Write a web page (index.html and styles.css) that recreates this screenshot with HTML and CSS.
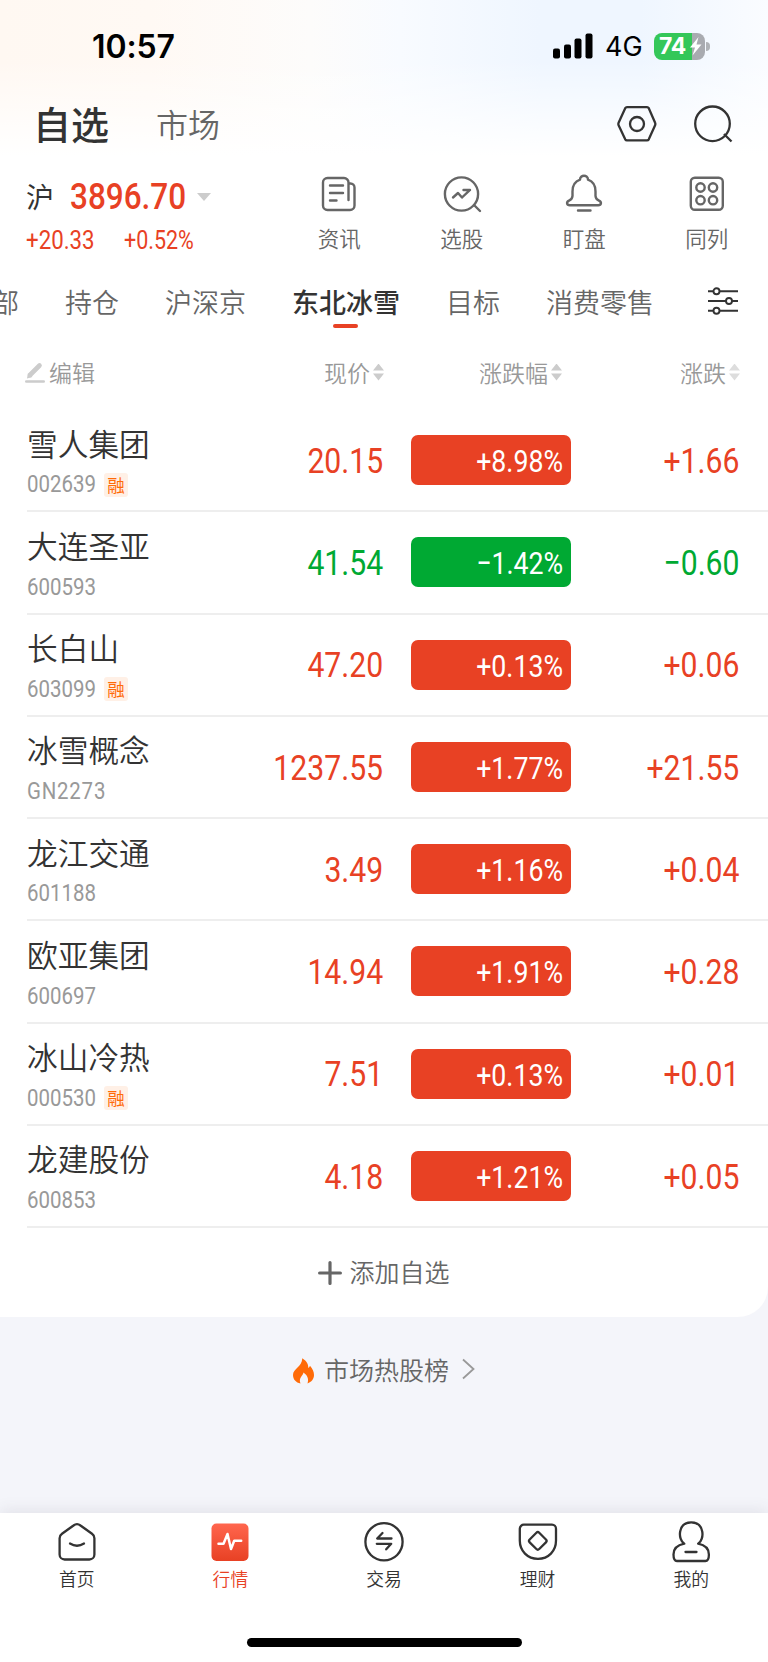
FILE: index.html
```html
<!DOCTYPE html>
<html lang="zh-CN">
<head>
<meta charset="utf-8">
<title>自选</title>
<link rel="stylesheet" href="styles.css">
</head>
<body>
<div class="screen">
  <div class="status">
    <div class="time">10:57</div>
    <div class="status-right">
      <svg width="40" height="26" viewBox="0 0 40 26"><rect x="0" y="15.5" width="7" height="10" rx="2"/><rect x="11" y="11.5" width="7" height="14" rx="2"/><rect x="21.500" y="5.500" width="7" height="20" rx="2"/><rect x="32.500" y="0.500" width="7" height="25" rx="2"/></svg>
      <span class="net">4G</span>
      <div class="battery"><div class="battery-body"><span>74</span><svg width="13" height="19" viewBox="0 0 13 19"><path d="M9.500 0 1 10.500h5L3.500 18.500 12.500 7.500H7.500Z" fill="#fff"/></svg></div><i class="battery-tip"></i></div>
    </div>
  </div>

  <header class="header">
    <h1>自选</h1>
    <span class="market">市场</span>
    <div class="header-icons">
      <svg width="40" height="38" viewBox="0 0 40 38" fill="none" stroke="#333" stroke-width="2.300"><path d="M10 2.200h20q1.200 0 1.800 1L38 17.500q.7 1.500 0 3L31.800 34.300q-.6 1-1.800 1H10q-1.200 0-1.800-1L1.700 20.500q-.7-1.500 0-3L8.200 3.200q.6-1 1.800-1Z"/><circle cx="20" cy="19" r="7"/></svg>
      <svg width="40" height="38" viewBox="0 0 40 38" fill="none" stroke="#333" stroke-width="2.300"><circle cx="19.500" cy="18.800" r="17.300"/><path d="m31 29 7.500 7.500"/></svg>
    </div>
  </header>

  <section class="summary">
    <div class="index">
      <div class="index-main"><span class="exchange">沪</span><span class="num index-value">3896.70</span><i class="caret"></i></div>
      <div class="index-sub"><span class="num">+20.33</span><span class="num percent">+0.52%</span></div>
    </div>
    <nav class="tools">
      <a class="tool"><svg width="40" height="40" viewBox="0 0 40 40"><path d="M28.500 36H8.500a4.500 4.500 0 0 1-4.500-4.500V8.500A4.500 4.500 0 0 1 8.500 4h16.500a4.500 4.500 0 0 1 4.500 4.500V26M29.500 9.500h2a4 4 0 0 1 4 4V31.500a4.500 4.500 0 0 1-4.500 4.500H24"/><path d="M11 11.500h13M11 19h13M11 26.500h6.500"/></svg><span>资讯</span></a>
      <a class="tool"><svg width="40" height="40" viewBox="0 0 40 40"><circle cx="19.500" cy="20" r="16.600"/><path d="m32 31 6 6M11 23.500l5-4.500 4 4.500 7.500-7.200M21.500 16h6.500"/></svg><span>选股</span></a>
      <a class="tool"><svg width="40" height="40" viewBox="0 0 40 40"><path d="M16 5.700C16 .5 24 .5 24 5.700c4.800 1.700 7.500 6.300 7.500 11.800v4.500q.2 3.200 3.500 4.600c3 1.500 2.300 4.700-.8 4.700H5.800c-3.100 0-3.800-3.200-.8-4.700q3.300-1.400 3.500-4.600v-4.500C8.500 12 11.200 7.400 16 5.700ZM14 36.500h12.500"/></svg><span>盯盘</span></a>
      <a class="tool"><svg width="40" height="40" viewBox="0 0 40 40"><rect x="3.800" y="3.800" width="32" height="32" rx="4"/><circle cx="13.500" cy="13.500" r="4.200"/><circle cx="26" cy="13.500" r="4.200"/><circle cx="13.500" cy="26.200" r="4.200"/><circle cx="26" cy="26.200" r="4.200"/></svg><span>同列</span></a>
    </nav>
  </section>

  <nav class="tabs">
    <span class="tab">部</span><span class="tab">持仓</span><span class="tab">沪深京</span><span class="tab active">东北冰雪</span><span class="tab">目标</span><span class="tab">消费零售</span>
    <svg class="filter" width="30" height="28" viewBox="0 0 30 28" fill="none" stroke="#333" stroke-width="1.900"><path d="M0 4.300h5.500M11.500 4.300H30M0 14h18M24 14h6M0 23.800h5.500M11.500 23.800H30"/><circle cx="8.500" cy="4.300" r="3"/><circle cx="21" cy="14" r="3"/><circle cx="8.500" cy="23.800" r="3"/></svg>
  </nav>

  <div class="grid thead">
    <span class="edit"><svg width="20" height="21" viewBox="0 0 20 21" stroke="#ccc" fill="none"><path d="M5 13 14.500 3.500" stroke-width="4.600" stroke-linecap="round"/><path d="M2 16.500 3 11l4.500 4Z" fill="#ccc" stroke="none"/><path d="M1.200 19.500h17.600" stroke-width="2.400" stroke-linecap="round"/></svg>编辑</span>
    <span class="sort">现价<i></i></span><span class="sort">涨跌幅<i></i></span><span class="sort pale">涨跌<i></i></span>
  </div>

  <main class="list">
    <div class="grid row up"><div class="stock"><b>雪人集团</b><div><span class="num code">002639</span><em>融</em></div></div><span class="num price">20.15</span><div class="pill"><span class="num">+8.98%</span></div><span class="num price">+1.66</span></div>
    <div class="grid row down"><div class="stock"><b>大连圣亚</b><div><span class="num code">600593</span></div></div><span class="num price">41.54</span><div class="pill"><span class="num">−1.42%</span></div><span class="num price">−0.60</span></div>
    <div class="grid row up"><div class="stock"><b>长白山</b><div><span class="num code">603099</span><em>融</em></div></div><span class="num price">47.20</span><div class="pill"><span class="num">+0.13%</span></div><span class="num price">+0.06</span></div>
    <div class="grid row up"><div class="stock"><b>冰雪概念</b><div><span class="num code lettered">GN2273</span></div></div><span class="num price">1237.55</span><div class="pill"><span class="num">+1.77%</span></div><span class="num price">+21.55</span></div>
    <div class="grid row up"><div class="stock"><b>龙江交通</b><div><span class="num code">601188</span></div></div><span class="num price">3.49</span><div class="pill"><span class="num">+1.16%</span></div><span class="num price">+0.04</span></div>
    <div class="grid row up"><div class="stock"><b>欧亚集团</b><div><span class="num code">600697</span></div></div><span class="num price">14.94</span><div class="pill"><span class="num">+1.91%</span></div><span class="num price">+0.28</span></div>
    <div class="grid row up"><div class="stock"><b>冰山冷热</b><div><span class="num code">000530</span><em>融</em></div></div><span class="num price">7.51</span><div class="pill"><span class="num">+0.13%</span></div><span class="num price">+0.01</span></div>
    <div class="grid row up"><div class="stock"><b>龙建股份</b><div><span class="num code">600853</span></div></div><span class="num price">4.18</span><div class="pill"><span class="num">+1.21%</span></div><span class="num price">+0.05</span></div>
  </main>
  <div class="add"><svg width="24" height="24" viewBox="0 0 24 24" stroke="#666" stroke-width="3.200" stroke-linecap="round"><path d="M12 1.600v20.800M1.600 12h20.800"/></svg><span>添加自选</span></div>
</div>

<div class="hot">
  <svg width="21" height="26" viewBox="0 0 21 26"><path d="M9.300.3C14 3.300 15.600 6.500 15.200 10q1.500-.7 1.800-2.300C19.500 10.500 21 13.500 21 17c0 4-2.500 7-6.500 8.500 1.500-4.500 0-8-4-11-.2 3-5.300 5-3 11C3 24.500 0 21.500 0 17 0 10.500 9 9.500 9.300.3Z" fill="#ff6b08"/></svg>
  <span>市场热股榜</span>
  <svg width="13" height="22" viewBox="0 0 13 22" fill="none" stroke="#999" stroke-width="1.800"><path d="m1 1.500 10.500 9.500L1 20.500"/></svg>
</div>

<footer class="bottom">
  <nav class="bottom-nav">
    <a><svg width="42" height="42" viewBox="0 0 42 42"><path d="M17.500 4.500q3.500-2.800 7 0L36 12.800q2.400 1.700 2.400 4.500V33.500a5 5 0 0 1-5 5H8.600a5 5 0 0 1-5-5V17.300q0-2.800 2.400-4.500Z"/><path d="M14 22.500q7 4.500 14 0"/></svg>首页</a>
    <a class="current"><svg width="42" height="42" viewBox="0 0 42 42"><defs><linearGradient id="g" x2="0" y2="1"><stop stop-color="#ff664e"/><stop offset="1" stop-color="#e84124"/></linearGradient></defs><rect x="2.500" y="2.500" width="37" height="37.500" rx="5" fill="url(#g)" stroke="none"/><path d="M9.500 22.700h5L18.500 13l3.500 15 3.200-8.200h7" stroke="#fff" stroke-width="2.500"/></svg>行情</a>
    <a><svg width="42" height="42" viewBox="0 0 42 42"><circle cx="21" cy="20.800" r="18.600"/><path d="M28.500 17.500H14.200l5.300-5.500M13.800 22.800H28.200l-5 5.500"/></svg>交易</a>
    <a><svg width="42" height="42" viewBox="0 0 42 42"><path d="M7 3.700h28a4 4 0 0 1 4 4V19.500C39 30 31.500 37.800 21 37.800S2.800 30 2.800 19.500V7.700a4 4 0 0 1 4.200-4Z"/><rect x="14" y="13.200" width="13.500" height="13.500" rx="2" transform="rotate(45 20.800 20)"/></svg>理财</a>
    <a><svg width="42" height="42" viewBox="0 0 42 42"><path d="M14.300 22.700C7.500 18.500 7.800 1.300 21.200 1.300s13.700 17.200 6.900 21.400c7.400 1.500 10.800 5 10.800 10.800 0 4-1.200 6.500-3.500 6.500H7c-2.300 0-3.500-2.500-3.500-6.500 0-5.800 3.400-9.300 10.800-10.800Z"/><path d="M15.500 31h11"/></svg>我的</a>
  </nav>
  <div class="home-indicator"></div>
</footer>
</body>
</html>
```
FILE: styles.css
```css
* { box-sizing: border-box; }
body {
  margin: 0;
  width: 768px;
  height: 1662px;
  overflow: hidden;
  display: flex;
  flex-direction: column;
  background: #f4f5fa;
  color: #333;
  font-family: "Noto Sans CJK SC", sans-serif;
  font-weight: 350;
}
svg { display: block; flex: none; }
.screen {
  height: 1317px;
  border-bottom-right-radius: 30px;
  background:
    linear-gradient(to bottom, rgba(255,255,255,0) 60px, #fff 156px),
    linear-gradient(to right, #fff8f2 0, #fff9f4 150px, #fdfcfb 310px, #f8fbff 400px, #eff6ff 540px, #eff6ff 640px, #fafcff 768px);
}
.num {
  display: inline-block;
  font-family: Roboto, sans-serif;
  font-weight: 400;
  line-height: 1;
  white-space: nowrap;
  transform: scaleX(.85);
  transform-origin: left center;
}

.status { height: 92px; display: flex; justify-content: space-between; padding: 0 58px 0 92px; align-items: center; }
.time { font: 600 32px/32px Inter, sans-serif; color: #000; letter-spacing: -.1px; padding-top: 1px; }
.status-right { display: flex; align-items: center; }
.net { font: 400 27px/30px Inter, sans-serif; color: #000; margin-left: 12px; width: 49px; padding-top: 2px; }
.battery { display: flex; align-items: center; }
.battery-body {
  width: 51px; height: 27px; border-radius: 8px; padding-left: 5px;
  display: flex; align-items: center;
  background: linear-gradient(to right, #34c759 38px, #a9abb0 38px);
}
.battery-body span { font: 700 23px/27px Inter, sans-serif; color: #fff; letter-spacing: -.3px; width: 30px; }
.battery-tip { width: 4px; height: 9px; margin-left: 1px; border-radius: 0 5px 5px 0; background: #b0b3b7; }

.header { height: 66px; display: flex; align-items: center; padding: 0 35px 2px 33px; }
.header h1 { margin: 0; width: 123px; font-size: 38px; line-height: 60px; font-weight: 500; padding-bottom: 3px; }
.market { font-size: 32px; line-height: 60px; color: #666; padding-bottom: 2px; }
.header-icons { margin-left: auto; display: flex; gap: 36px; }

.summary { height: 107px; display: flex; }
.index { width: 278px; padding: 22px 0 0 26px; color: #e84124; }
.index-main { height: 34px; display: flex; align-items: center; }
.exchange { width: 44px; font-size: 28px; line-height: 34px; color: #333; font-weight: 400; padding-bottom: 2px; }
.index-value { font-size: 36px; font-weight: 500; width: 127px; transform: scaleX(.875); }
.caret { border: 7px solid transparent; border-top: 8px solid #ccc; border-bottom: 0; }
.index-sub { display: flex; padding-top: 14px; font-size: 25.300px; }
.index-sub .num { width: 98px; transform: scaleX(.88); }
.index-sub .percent { transform: scaleX(.85); }
.tools { flex: 1; display: grid; grid-template-columns: repeat(4, 1fr); padding-top: 16px; }
.tool { display: flex; flex-direction: column; align-items: center; font-size: 21.500px; line-height: 30px; color: #666; }
.tool svg { fill: none; stroke: #666; stroke-width: 2.400; stroke-linecap: round; stroke-linejoin: round; margin-bottom: 9px; }

.tabs { height: 72px; display: flex; align-items: center; font-size: 27px; line-height: 40px; color: #666; margin-left: -8px; gap: 46px; padding: 2px 30px 0 0; }
.tab { flex: none; }
.active { position: relative; color: #333; font-weight: 500; }
.active::after { content: ""; position: absolute; left: 41px; top: 42px; width: 25px; height: 4px; border-radius: 2px; background: #e84124; }
.filter { margin: 0 0 2px auto; }

.grid { display: grid; grid-template-columns: 356px 188px 168.500px; align-items: center; }
.thead { grid-template-columns: 359px 178px 178px; height: 73px; padding: 0 0 3px 25px; font-size: 23px; line-height: 36px; color: #999; }
.edit { grid-area: 1 / 1; display: flex; align-items: center; gap: 4px; }
.sort { grid-row: 1; display: flex; align-items: center; justify-content: flex-end; gap: 3px; }
.sort:nth-child(2) { grid-column: 1; }
.sort i { width: 11px; height: 17px; background: #ccc; clip-path: polygon(50% 0, 100% 41%, 0 41%, 0 59%, 100% 59%, 50% 100%, 0 59%, 0 41%); }
.pale i { background: #ddd; }

.row { height: 102.280px; margin-left: 27px; border-bottom: 2px solid #eee; }
.stock { grid-area: 1 / 1; }
.stock b { display: block; font-weight: 350; font-size: 30.700px; line-height: 40px; }
.stock div { display: flex; align-items: center; height: 24px; margin-top: 10px; margin-bottom: 1px; }
.code { font-size: 23.500px; width: 77px; transform: scaleX(.87); color: #999; padding-top: 1px; }
.lettered { letter-spacing: .9px; }
.stock em { width: 24px; height: 24px; border-radius: 3px; background: #fff0e6; color: #ff6b08; font: 400 17.500px/23px "Noto Sans CJK SC", sans-serif; text-align: center; }
.price { font-size: 35.500px; justify-self: end; transform-origin: right center; padding-top: 3px; }
.stock + .price { grid-area: 1 / 1; }
.pill { width: 160.500px; height: 50px; justify-self: end; border-radius: 7px; display: flex; align-items: center; justify-content: flex-end; padding: 2px 8px 0 0; color: #fff; background: #e84124; font-size: 32px; }
.pill .num { transform: scaleX(.835); transform-origin: right center; }
.up { color: #e84124; }
.down { color: #00a933; }
.down .pill { background: #00a933; }
.stock b { color: #333; }

.add { height: 89px; display: flex; align-items: center; justify-content: center; gap: 7px; color: #666; font-size: 25px; }
.add span { padding-bottom: 3px; }
.hot { height: 196px; display: flex; justify-content: center; padding: 39px 0 0 0; color: #666; font-size: 25px; line-height: 28px; }
.hot span { margin: -1px 13px 0 10px; }
.hot svg { margin-top: 2px; }

.bottom { height: 149px; background: #fff; box-shadow: 0 -3px 14px rgba(80,70,90,.1); }
.bottom-nav { height: 125px; display: grid; grid-template-columns: repeat(5, 1fr); padding-top: 8px; }
.bottom-nav a { display: flex; flex-direction: column; align-items: center; font-size: 17.800px; line-height: 26px; gap: 2px; }
.bottom-nav svg { fill: none; stroke: #333; stroke-width: 2.300; stroke-linecap: round; stroke-linejoin: round; }
.current { color: #e84124; }
.home-indicator { width: 275px; height: 9px; border-radius: 5px; margin: 0 auto; background: #000; }
```
